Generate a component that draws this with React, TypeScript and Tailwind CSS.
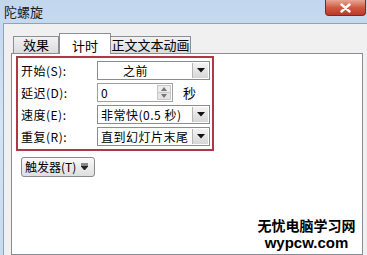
import React from 'react'

const FONT = { fontFamily: '"SimSun", "Noto Sans CJK SC", sans-serif' }

function ArrowBtn() {
  return (
    <div className="w-[16px] h-full flex items-center justify-center bg-gradient-to-b from-[#f4f4f4] to-[#d6d6d6] border-l border-[#b5b5b5]">
      <svg width="8" height="5" viewBox="0 0 8 5">
        <polygon points="0,0 8,0 4,4.5" fill="#111" />
      </svg>
    </div>
  )
}

function Select({ value, center = false }: { value: string; center?: boolean }) {
  return (
    <div className="h-[19px] flex border border-[#8c8c8c] bg-white">
      <div className={`flex-1 flex items-center text-[12px] whitespace-nowrap overflow-hidden tracking-[0.5px] text-black ${center ? 'justify-center pr-[18px]' : 'pl-[3px]'}`}>
        {value}
      </div>
      <div className="p-[1px] h-full">
        <ArrowBtn />
      </div>
    </div>
  )
}

function Spin() {
  return (
    <div className="h-[19px] w-[76px] flex border border-[#a0a0a0] bg-white">
      <div className="flex-1 flex items-center pl-[3px] text-[12px] text-black">0</div>
      <div className="w-[14px] flex flex-col my-[1px] mr-[1px] border border-[#c8c8c8]">
        <div className="flex-1 flex items-center justify-center bg-[#ececec] border-b border-[#c8c8c8]">
          <svg width="6" height="4" viewBox="0 0 6 4">
            <polygon points="0,4 6,4 3,0" fill="#777" />
          </svg>
        </div>
        <div className="flex-1 flex items-center justify-center bg-[#e4e4e4]">
          <svg width="6" height="4" viewBox="0 0 6 4">
            <polygon points="0,0 6,0 3,4" fill="#777" />
          </svg>
        </div>
      </div>
    </div>
  )
}

export default function App() {
  const rows = [
    { label: '开始(S):', ctl: <Select value="之前" center /> },
    {
      label: '延迟(D):',
      ctl: (
        <div className="flex items-center gap-[10px]">
          <Spin />
          <span className="text-[13px]">秒</span>
        </div>
      ),
    },
    { label: '速度(E):', ctl: <Select value="非常快(0.5 秒)" /> },
    { label: '重复(R):', ctl: <Select value="直到幻灯片末尾" /> },
  ]

  return (
    <div className="w-[367px] h-[255px] overflow-hidden flex flex-col bg-gradient-to-b from-[#c2d7ee] via-[#d4e4f4] to-[#c7dbef] text-black" style={FONT}>
      {/* title bar */}
      <div className="h-[23px] flex items-start justify-between shrink-0">
        <div className="pl-[4px] pt-[2px] text-[13px] text-[#1a1a1a]">陀螺旋</div>
        <div className="w-[41px] h-[16px] mr-[1px] rounded-b-[4px] border border-t-0 border-[#7a2b20] bg-gradient-to-b from-[#e8a595] via-[#d05a44] to-[#b83a25] flex items-center justify-center">
          <svg width="11" height="10" viewBox="0 0 11 10">
            <path d="M1.5 1.5 L9.5 8.5 M9.5 1.5 L1.5 8.5" stroke="#fff" strokeWidth="2.4" strokeLinecap="round" />
          </svg>
        </div>
      </div>

      {/* client area */}
      <div className="flex-1 flex pl-[3px]">
        <div className="flex-1 flex flex-col bg-[#f0f0f0] border-l border-t border-[#8da2bb] pt-[8px] pl-[7px] pr-[4px]">
          {/* tabs */}
          <div className="h-[21px] flex items-end pl-[2px] shrink-0">
            <div className="h-[17px] w-[46px] border border-b-0 border-[#8c8e94] bg-gradient-to-b from-[#f2f2f2] to-[#dcdcdc] flex items-center justify-center text-[13px]">
              效果
            </div>
            <div className="h-[21px] w-[52px] -mb-[1px] z-10 border border-b-0 border-[#8c8e94] bg-white flex items-start justify-center pt-[2px] text-[13px]">
              计时
            </div>
            <div className="h-[17px] w-[80px] border border-b-0 border-l-0 border-[#8c8e94] bg-gradient-to-b from-[#f2f2f2] to-[#dcdcdc] flex items-center justify-center text-[13px]">
              正文文本动画
            </div>
          </div>

          {/* panel */}
          <div className="relative flex-1 bg-white border border-[#898c95] pt-[2px] pl-[4px]">
            <div className="w-[198px] h-[95px] border-2 border-[#b03846] pl-[3px] pr-[2px] pt-[3px] flex flex-col gap-[3px]">
              {rows.map((r) => (
                <div key={r.label} className="h-[19px] flex items-center">
                  <div className="w-[76px] text-[12px] whitespace-nowrap tracking-[0.5px]">{r.label}</div>
                  <div className="w-[113px]">{r.ctl}</div>
                </div>
              ))}
            </div>

            <div className="mt-[6px] ml-[5px] w-[74px] h-[20px] rounded-[3px] border border-[#8a8a8a] bg-gradient-to-b from-[#fafafa] to-[#dedede] flex items-center pl-[3px] gap-[5px] text-[12px] whitespace-nowrap">
              <span>触发器(T)</span>
              <svg width="7" height="8" viewBox="0 0 7 8">
                <path d="M0 1 H7 M0 3 L7 3 L3.5 7 Z" stroke="#222" strokeWidth="1" fill="#222" />
              </svg>
            </div>

            {/* watermark */}
            <div className="absolute left-[244px] top-[163px] w-[101px] flex flex-col items-center">
              <span className="block text-[14px] leading-[17px] font-bold" style={{ fontFamily: '"Noto Sans CJK SC", sans-serif' }}>
                无忧电脑学习网
              </span>
              <span className="block text-[15px] leading-[17px] font-bold" style={{ fontFamily: '"Liberation Sans", Arial, sans-serif' }}>
                wypcw.com
              </span>
            </div>
          </div>
        </div>
      </div>
    </div>
  )
}
